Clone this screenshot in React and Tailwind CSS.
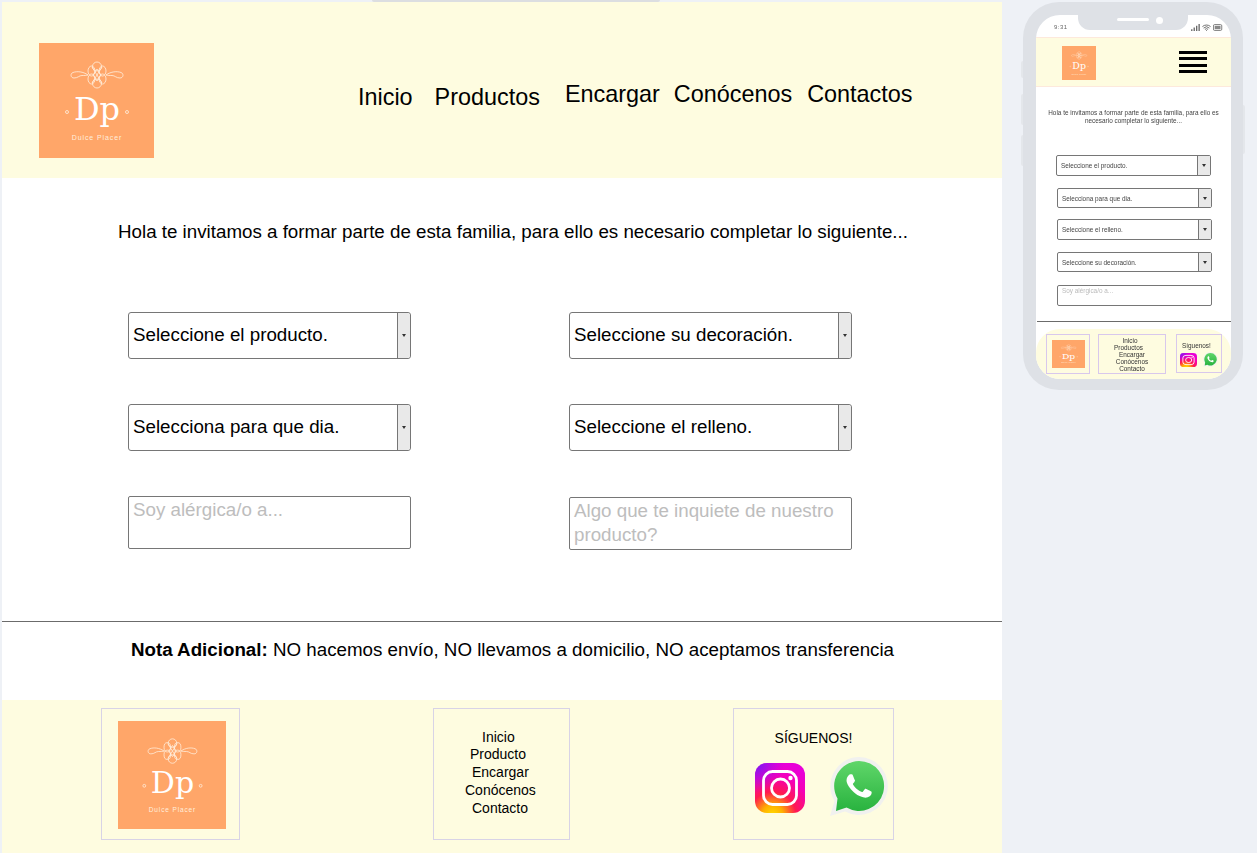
import React from 'react';
import { Wifi } from 'lucide-react';

const Logo = ({ className }) => (
  <svg viewBox="0 0 115 115" preserveAspectRatio="none" className={className}>
    <rect width="115" height="115" fill="#ffa669" />
    <g fill="none" stroke="#fff0e0" strokeWidth="0.8">
      <circle cx="58" cy="23.500" r="4.500" />
      <circle cx="58" cy="40.500" r="4.500" />
      <ellipse cx="52.500" cy="28" rx="3.500" ry="5" />
      <ellipse cx="63.500" cy="28" rx="3.500" ry="5" />
      <ellipse cx="52.500" cy="36" rx="3.500" ry="5" />
      <ellipse cx="63.500" cy="36" rx="3.500" ry="5" />
      <path d="M53 24l10 16M63 24l-10 16M54 32l4-6 4 6-4 6z" />
      <path d="M49 32c-5-3.500-11-4-15-2.500-3 1-2.500 5.500 1 5.500 4 0 5-2.500 8-2.500 2.500 0 4 0 6-.5z" />
      <path d="M67 32c5-3.500 11-4 15-2.500 3 1 2.500 5.500-1 5.500-4 0-5-2.500-8-2.500-2.500 0-4 0-6-.5z" />
    </g>
    <circle cx="28" cy="69" r="1.500" fill="none" stroke="#fff0e0" strokeWidth="0.8" />
    <circle cx="88" cy="69" r="1.500" fill="none" stroke="#fff0e0" strokeWidth="0.8" />
    <text x="58" y="77" textAnchor="middle" fill="#ffffff" fontSize="32" fontFamily="'DejaVu Serif', serif">Dp</text>
    <text x="58" y="96.500" textAnchor="middle" fill="#ffeedd" fontSize="7" letterSpacing="0.900" fontFamily="'Liberation Sans', sans-serif">Dulce Placer</text>
  </svg>
);

const Instagram = ({ className }) => (
  <svg viewBox="0 0 50 50" preserveAspectRatio="none" className={className}>
    <defs>
      <radialGradient id="igFill" cx="35%" cy="105%" r="105%">
        <stop offset="0" stopColor="#ffdd00" />
        <stop offset="0.2" stopColor="#ffb000" />
        <stop offset="0.45" stopColor="#ff1a50" />
        <stop offset="0.75" stopColor="#f500b8" />
        <stop offset="1" stopColor="#e800d8" />
      </radialGradient>
      <radialGradient id="igCorner" cx="0%" cy="0%" r="60%">
        <stop offset="0" stopColor="#6a1cf5" />
        <stop offset="1" stopColor="#a010f0" stopOpacity="0" />
      </radialGradient>
    </defs>
    <rect width="50" height="50" rx="12" fill="url(#igFill)" />
    <rect width="50" height="50" rx="12" fill="url(#igCorner)" />
    <rect x="8.500" y="8.500" width="33" height="33" rx="9" fill="none" stroke="#fff" strokeWidth="2.800" />
    <circle cx="25.500" cy="25" r="9" fill="none" stroke="#fff" strokeWidth="2.800" />
    <circle cx="35.500" cy="15" r="2.200" fill="#fff" />
  </svg>
);

const Whatsapp = ({ className }) => (
  <svg viewBox="0 0 60 60" className={className}>
    <defs>
      <linearGradient id="waFill" x1="0" y1="0" x2="0" y2="1">
        <stop offset="0" stopColor="#60d66a" />
        <stop offset="1" stopColor="#29b33f" />
      </linearGradient>
    </defs>
    <path d="M30 0a29 29 0 1 1-14 54.500L1 59l4.500-15A29 29 0 0 1 30 0z" fill="#f1f1ef" />
    <path d="M30 4a25 25 0 1 1-12.500 46.600L7 54l1.500-12.500A25 25 0 0 1 30 4z" fill="url(#waFill)" />
    <path
      transform="translate(30 29) scale(2.080) translate(-12 -12)"
      d="M17.472 14.382c-.297-.149-1.758-.867-2.03-.967-.273-.099-.471-.148-.67.15-.197.297-.767.966-.94 1.164-.173.199-.347.223-.644.075-.297-.15-1.255-.463-2.39-1.475-.883-.788-1.48-1.761-1.653-2.059-.173-.297-.018-.458.13-.606.134-.133.298-.347.446-.52.149-.174.198-.298.298-.497.099-.198.05-.371-.025-.52-.075-.149-.669-1.612-.916-2.207-.242-.579-.487-.5-.669-.51-.173-.008-.371-.01-.57-.01-.198 0-.52.074-.792.372-.272.297-1.04 1.016-1.04 2.479 0 1.462 1.065 2.875 1.213 3.074.149.198 2.096 3.2 5.077 4.487.709.306 1.262.489 1.694.625.712.227 1.36.195 1.871.118.571-.085 1.758-.719 2.006-1.413.248-.694.248-1.289.173-1.413-.074-.124-.272-.198-.57-.347z"
      fill="#fff"
    />
  </svg>
);

const Dropdown = ({ label }) => (
  <div className="flex h-[47px] w-[283px] rounded-[3px] border border-[#767676] bg-white">
    <div className="flex-1 pl-1 text-[18.75px] leading-[43px] text-black">{label}</div>
    <div className="flex w-[13px] items-center justify-center rounded-r-[3px] border-l border-[#767676] bg-[#e9e9e9]">
      <div className="h-0 w-0 border-x-[2.5px] border-t-[3px] border-x-transparent border-t-[#333]" />
    </div>
  </div>
);

const PhoneDropdown = ({ label, className }) => (
  <div className={`flex w-[155px] shrink-0 rounded-[2px] border border-[#767676] bg-white ${className}`}>
    <div className="flex-1 pl-1 text-[6.4px] leading-[19px] text-[#444]">{label}</div>
    <div className="flex w-[13px] items-center justify-center border-l border-[#767676] bg-[#e9e9e9]">
      <div className="h-0 w-0 border-x-[2.5px] border-t-[3px] border-x-transparent border-t-[#333]" />
    </div>
  </div>
);

const Phone = () => (
  <div className="relative ml-[21px] mt-[2px] h-[388px] w-[220px] shrink-0 rounded-[36px] bg-[#dee1e6] p-[13px]">
    <div className="absolute -left-[2px] top-[59px] h-[17px] w-[2px] rounded-l bg-[#e4e7eb]" />
    <div className="absolute -left-[2px] top-[92px] h-[31px] w-[2px] rounded-l bg-[#e4e7eb]" />
    <div className="absolute -left-[2px] top-[133px] h-[31px] w-[2px] rounded-l bg-[#e4e7eb]" />
    <div className="absolute -right-[2px] top-[103px] h-[49px] w-[2px] rounded-r bg-[#e4e7eb]" />

    <div className="flex h-[364px] w-[195px] flex-col overflow-hidden rounded-[24px] bg-white blur-[0.3px]">
      <div className="relative flex h-[22px] shrink-0 items-center justify-between pl-[18px] pr-[8px] pt-[1px]">
        <span className="mt-[2px] text-[6px] tracking-[0.5px] text-[#666]">9:31</span>
        <div className="absolute left-[42px] top-0 flex h-[15px] w-[110px] items-start rounded-b-[12px] bg-[#dee1e6] pl-[39px] pt-[3px]">
          <div className="h-[3px] w-[32px] rounded-full bg-white" />
          <div className="ml-[7px] -mt-[1px] h-[7px] w-[7px] rounded-full bg-white" />
        </div>
        <div className="mt-[2px] flex items-center gap-[2px]">
          <svg viewBox="0 0 10 8" className="h-[7px] w-[9px]">
            <rect x="0" y="6" width="1.500" height="2" fill="#666" />
            <rect x="2.800" y="4" width="1.500" height="4" fill="#666" />
            <rect x="5.600" y="2" width="1.500" height="6" fill="#666" />
            <rect x="8.400" y="0" width="1.500" height="8" fill="#666" />
          </svg>
          <Wifi className="h-[9px] w-[9px] text-[#666]" strokeWidth={2.5} />
          <svg viewBox="0 0 12 8" className="h-[7px] w-[10px]">
            <rect x="0.500" y="0.500" width="10" height="7" rx="1.500" fill="none" stroke="#666" />
            <rect x="2" y="2" width="7" height="4" fill="#888" />
          </svg>
        </div>
      </div>

      <div className="flex h-[50px] shrink-0 items-center justify-between border-y border-[#fde9dc] bg-[#fefce0] pl-[26px] pr-[24px]">
        <Logo className="mt-px h-[34px] w-[34px]" />
        <div className="flex w-[28px] flex-col gap-[3.3px]">
          <div className="h-[3px] bg-black" />
          <div className="h-[3px] bg-black" />
          <div className="h-[3px] bg-black" />
          <div className="h-[3px] bg-black" />
        </div>
      </div>

      <p className="mx-auto mt-[22px] w-[180px] text-center text-[6.4px] leading-[8px] text-[#444]">
        Hola te invitamos a formar parte de esta familia, para ello es necesario completar lo siguiente...
      </p>

      <PhoneDropdown label="Seleccione el producto." className="ml-[20px] mt-[30px] h-[21px]" />
      <PhoneDropdown label="Selecciona para que dia." className="ml-[21px] mt-[12px] h-[20px]" />
      <PhoneDropdown label="Seleccione el relleno." className="ml-[21px] mt-[11px] h-[21px]" />
      <PhoneDropdown label="Seleccione su decoración." className="ml-[21px] mt-[12px] h-[20px]" />
      <div className="ml-[21px] mt-[13px] h-[21px] w-[155px] shrink-0 rounded-[2px] border border-[#767676] pl-1 text-[6.4px] leading-[10px] text-[#bbb]">
        Soy alérgica/o a...
      </div>

      <div className="ml-[1px] mt-[15px] h-px shrink-0 bg-[#6b6b6b]" />

      <div className="mt-[7px] flex flex-1 items-start rounded-t-[24px] bg-[#fefce0] pl-[10px] pt-[5px]">
        <div className="flex h-[40px] w-[44px] items-center justify-center border border-[#d8c8ec]">
          <Logo className="h-[28px] w-[33px]" />
        </div>
        <div className="ml-[8px] h-[40px] w-[68px] border border-[#d8c8ec] pt-[2px] text-center text-[6.4px] leading-[7px] text-[#333]">
          <div className="pr-[4px]">Inicio</div>
          <div className="pr-[7px]">Productos</div>
          <div>Encargar</div>
          <div>Conócenos</div>
          <div>Contacto</div>
        </div>
        <div className="ml-[10px] h-[39px] w-[46px] border border-[#d8c8ec] pt-[7px]">
          <div className="pl-[5px] text-[6.4px] leading-[7px] text-[#333]">Síguenos!</div>
          <div className="mt-[3px] flex items-center pl-[3px]">
            <Instagram className="h-[14px] w-[17px]" />
            <Whatsapp className="ml-[6px] h-[15px] w-[15px]" />
          </div>
        </div>
      </div>
    </div>
  </div>
);

export default function App() {
  return (
    <div className="relative flex h-[853px] w-[1257px] overflow-hidden bg-[#eef1f6] font-['Liberation_Sans',sans-serif]">
      <div className="absolute left-[372px] top-0 h-[2px] w-[288px] rounded-b bg-[#dcdee1]" />
      <div className="ml-[2px] mt-[2px] flex h-[851px] w-[1000px] shrink-0 flex-col bg-white">
        <header className="flex h-[176px] shrink-0 items-start bg-[#fefce0] text-[23.4px] leading-[28px] text-black">
          <Logo className="ml-[37px] mt-[41px] h-[115px] w-[115px] shrink-0" />
          <a className="ml-[204px] mt-[81px]">Inicio</a>
          <a className="ml-[22px] mt-[81px]">Productos</a>
          <a className="ml-[25px] mt-[78px]">Encargar</a>
          <a className="ml-[14px] mt-[78px]">Conócenos</a>
          <a className="ml-[15px] mt-[78px]">Contactos</a>
        </header>

        <p className="mt-[43px] pl-[116px] text-[18.75px] leading-[21px] text-black">
          Hola te invitamos a formar parte de esta familia, para ello es necesario completar lo siguiente...
        </p>

        <div className="ml-[126px] mt-[70px] grid grid-cols-[283px_283px] gap-x-[158px] gap-y-[45px]">
          <Dropdown label="Seleccione el producto." />
          <Dropdown label="Seleccione su decoración." />
          <Dropdown label="Selecciona para que dia." />
          <Dropdown label="Seleccione el relleno." />
          <textarea
            readOnly
            placeholder="Soy alérgica/o a..."
            className="h-[53px] w-[283px] resize-none rounded-[2px] border border-[#767676] bg-white px-1 pt-px text-[18.75px] leading-[24px] outline-none placeholder:text-[#bdbdbd]"
          />
          <textarea
            readOnly
            placeholder="Algo que te inquiete de nuestro producto?"
            className="mt-px h-[53px] w-[283px] resize-none rounded-[2px] border border-[#767676] bg-white px-1 pt-px text-[18.75px] leading-[24px] outline-none placeholder:text-[#bdbdbd]"
          />
        </div>

        <div className="mt-[71px] h-px shrink-0 bg-[#6b6b6b]" />

        <p className="mt-[17px] pl-[21px] text-center text-[18.75px] leading-[21px] text-black">
          <strong>Nota Adicional:</strong> NO hacemos envío, NO llevamos a domicilio, NO aceptamos transferencia
        </p>

        <footer className="mt-[40px] flex flex-1 items-start bg-[#fefce0] pt-[8px]">
          <div className="ml-[99px] h-[132px] w-[139px] border border-[#d8d3e6] pl-[16px] pt-[12px]">
            <Logo className="h-[108px] w-[108px]" />
          </div>
          <div className="ml-[193px] h-[132px] w-[137px] border border-[#d8d3e6] pt-[20px] text-[14px] text-black">
            <div className="pl-[48px] leading-[17px]">Inicio</div>
            <div className="pl-[36px] leading-[17px]">Producto</div>
            <div className="pl-[38px] leading-[18px]">Encargar</div>
            <div className="pl-[31px] leading-[18px]">Conócenos</div>
            <div className="pl-[38px] leading-[18px]">Contacto</div>
          </div>
          <div className="ml-[163px] h-[132px] w-[161px] border border-[#d8d3e6] pt-[20px]">
            <div className="text-center text-[14px] leading-[18px] text-black">SÍGUENOS!</div>
            <div className="mt-[10px] flex items-start pl-[21px]">
              <Instagram className="mt-[6px] h-[50px] w-[50px]" />
              <Whatsapp className="ml-[24px] h-[60px] w-[60px]" />
            </div>
          </div>
        </footer>
      </div>
      <Phone />
    </div>
  );
}
